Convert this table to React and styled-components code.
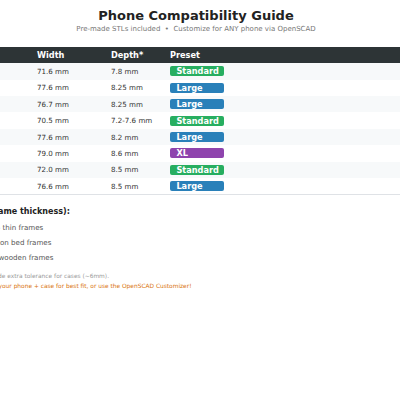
import styled, { createGlobalStyle } from "styled-components";

const GlobalStyle = createGlobalStyle`
	html, body {
		margin: 0;
		background: #fff;
		overflow: hidden;
		font-family: "DejaVu Sans", Verdana, sans-serif;
	}
`;

const Page = styled.div`
	display: flex;
	justify-content: center;
	padding-right: 8px;
`;

const Card = styled.div`
	flex-shrink: 0;
	width: 620px;
	padding-top: 7.5px;
`;

const Title = styled.h1`
	margin: 0;
	font-size: 13px;
	line-height: 16px;
	font-weight: bold;
	color: #222;
	text-align: center;
`;

const Subtitle = styled.p`
	margin: 0;
	font-size: 7px;
	line-height: 10px;
	color: #777;
	text-align: center;
`;

const Table = styled.table`
	width: 100%;
	margin-top: 13.8px;
	table-layout: fixed;
	border-collapse: collapse;
	border-bottom: 1px solid #dfe2e6;
`;

const HeadCell = styled.th`
	height: 16px;
	padding: 0 6px;
	background: #2d3436;
	color: #fff;
	font-size: 8.2px;
	font-weight: bold;
	text-align: left;
	vertical-align: middle;
`;

const Row = styled.tr`
	background: ${(p) => (p.$odd ? "#f7f9fa" : "#fff")};
`;

const Cell = styled.td`
	height: 16.4px;
	padding: 0 6px;
	font-size: 7.1px;
	color: #333;
	vertical-align: middle;
	white-space: nowrap;
`;

const presetColors = {
	Standard: "#27ae60",
	Large: "#2980b9",
	XL: "#8e44ad",
};

const Badge = styled.span`
	display: block;
	width: 54px;
	height: 10px;
	padding-left: 6.4px;
	box-sizing: border-box;
	border-radius: 2px;
	background: ${(p) => presetColors[p.$preset]};
	color: #fff;
	font-size: 8.2px;
	line-height: 10px;
	font-weight: bold;
`;

const Notes = styled.div`
	padding-left: 40px;
`;

const NotesTitle = styled.h3`
	margin: 11.4px 0 0;
	font-size: 8px;
	line-height: 10px;
	font-weight: bold;
	color: #222;
	white-space: nowrap;
`;

const List = styled.ul`
	margin: 4.5px 0 0;
	padding: 0;
	list-style: none;
`;

const Item = styled.li`
	font-size: 7.1px;
	line-height: 14.75px;
	color: #555;
	white-space: nowrap;
`;

const Footnote = styled.p`
	margin: 5.5px 0 0 12.6px;
	font-size: 5.88px;
	line-height: 10px;
	color: ${(p) => (p.$tip ? "#d9730d" : "#999")};
	white-space: nowrap;
	& + & {
		margin-top: 0;
	}
`;

const phones = [
	{ name: "iPhone 15", width: "71.6 mm", depth: "7.8 mm", preset: "Standard" },
	{ name: "iPhone 15 Plus", width: "77.6 mm", depth: "8.25 mm", preset: "Large" },
	{ name: "iPhone 15 Pro Max", width: "76.7 mm", depth: "8.25 mm", preset: "Large" },
	{ name: "Galaxy S24", width: "70.5 mm", depth: "7.2-7.6 mm", preset: "Standard" },
	{ name: "Galaxy S24+", width: "77.6 mm", depth: "8.2 mm", preset: "Large" },
	{ name: "Galaxy S24 Ultra", width: "79.0 mm", depth: "8.6 mm", preset: "XL" },
	{ name: "Pixel 8", width: "72.0 mm", depth: "8.5 mm", preset: "Standard" },
	{ name: "Pixel 8 Pro", width: "76.6 mm", depth: "8.5 mm", preset: "Large" },
];

export default function App() {
	return (
		<Page>
			<GlobalStyle />
			<Card>
				<Title>Phone Compatibility Guide</Title>
				<Subtitle>
					Pre-made STLs included{"\u00a0 • \u00a0"}Customize for ANY phone via OpenSCAD
				</Subtitle>
				<Table>
					<colgroup>
						<col style={{ width: 145 }} />
						<col style={{ width: 74 }} />
						<col style={{ width: 59 }} />
						<col />
					</colgroup>
					<thead>
						<tr>
							<HeadCell>Phone</HeadCell>
							<HeadCell>Width</HeadCell>
							<HeadCell>Depth*</HeadCell>
							<HeadCell>Preset</HeadCell>
						</tr>
					</thead>
					<tbody>
						{phones.map((p, i) => (
							<Row key={p.name} $odd={i % 2 === 0}>
								<Cell>{p.name}</Cell>
								<Cell>{p.width}</Cell>
								<Cell>{p.depth}</Cell>
								<Cell>
									<Badge $preset={p.preset}>{p.preset}</Badge>
								</Cell>
							</Row>
						))}
					</tbody>
				</Table>
				<Notes>
					<NotesTitle>Preset Guide (frame thickness):</NotesTitle>
					<List>
						<Item>• Standard: 25 mm – thin frames</Item>
						<Item>• Large: 35 mm – futon bed frames</Item>
						<Item>• XL: 45 mm – thick wooden frames</Item>
					</List>
					<Footnote>* Depth values include extra tolerance for cases (~6mm).</Footnote>
					<Footnote $tip>
						Not listed? Measure your phone + case for best fit, or use the OpenSCAD Customizer!
					</Footnote>
				</Notes>
			</Card>
		</Page>
	);
}
